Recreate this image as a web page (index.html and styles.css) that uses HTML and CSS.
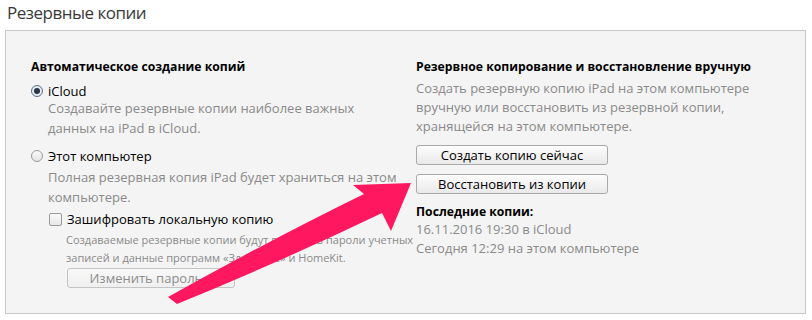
FILE: index.html
```html
<!DOCTYPE html>
<html lang="ru">
<head>
    <meta charset="UTF-8">
    <title>Резервные копии</title>
    <link rel="stylesheet" href="styles.css">
</head>
<body>
    <div class="page">
        <h1 class="title">Резервные копии</h1>
        <div class="panel">
            <div class="column left">
                <h2 class="heading">Автоматическое создание копий</h2>
                <label class="option">
                    <span class="radio checked"></span>
                    <span>iCloud</span>
                </label>
                <p class="hint first">Создавайте резервные копии наиболее важных<br>данных на iPad в iCloud.</p>
                <label class="option second">
                    <span class="radio"></span>
                    <span>Этот компьютер</span>
                </label>
                <p class="hint">Полная резервная копия iPad будет храниться на этом<br>компьютере.</p>
                <div class="nested">
                    <label class="option">
                        <span class="checkbox"></span>
                        <span>Зашифровать локальную копию</span>
                    </label>
                    <p class="hint small">Создаваемые резервные копии будут включать пароли учетных<br>записей и данные программ «Здоровье» и HomeKit.</p>
                    <button class="btn disabled">Изменить пароль...</button>
                </div>
            </div>
            <div class="column right">
                <h2 class="heading">Резервное копирование и восстановление вручную</h2>
                <p class="hint">Создать резервную копию iPad на этом компьютере<br>вручную или восстановить из резервной копии,<br>хранящейся на этом компьютере.</p>
                <div class="buttons">
                    <button class="btn">Создать копию сейчас</button>
                    <button class="btn">Восстановить из копии</button>
                </div>
                <h3 class="heading last">Последние копии:</h3>
                <p class="hint recent">16.11.2016 19:30 в iCloud<br>Сегодня 12:29 на этом компьютере</p>
            </div>
        </div>
        <svg class="arrow" width="812" height="320" viewBox="0 0 812 320">
            <path d="M168,297 Q270,240 364,194 L353,185 L411,183 L391,231 L382,213 Q280,262 177,304 Z" fill="#ff1760"/>
        </svg>
    </div>
</body>
</html>
```

FILE: styles.css
```css
* {
    margin: 0;
    padding: 0;
    box-sizing: border-box;
}

body {
    font-family: "Open Sans", "Noto Sans", sans-serif;
    font-size: 13px;
    background-color: #fff;
    color: #000;
}

.page {
    position: relative;
    width: 812px;
    height: 320px;
    padding: 0 6px 0 5px;
}

.title {
    font-size: 17px;
    font-weight: normal;
    letter-spacing: -0.5px;
    color: #3a3a3a;
    line-height: 26px;
    padding: 0 0 4px 2px;
}

.panel {
    display: flex;
    height: 284px;
    background-color: #f4f4f4;
    border: 1px solid #c8c8c8;
    padding: 26px 0 0 25px;
}

.column.left {
    width: 385px;
}

.column.right {
    flex: 1;
}

.heading {
    font-size: 12.2px;
    font-weight: bold;
    line-height: 20px;
    margin-bottom: 4px;
}

.option {
    display: flex;
    align-items: center;
    gap: 5px;
    line-height: 20px;
}

.option.second {
    margin-top: 8px;
}

.radio {
    width: 12px;
    height: 12px;
    border: 1px solid #9a9a9a;
    border-radius: 50%;
    background: linear-gradient(#fafafa, #e4e4e4);
    display: flex;
    align-items: center;
    justify-content: center;
}

.radio.checked {
    border-color: #5d6f8a;
    background: #e3ebf5;
}

.radio.checked::after {
    content: "";
    width: 6px;
    height: 6px;
    border-radius: 50%;
    background: #283448;
}

.checkbox {
    width: 13px;
    height: 13px;
    border: 1px solid #9a9a9a;
    border-radius: 2px;
    background: linear-gradient(#fafafa, #e6e6e6);
}

.hint {
    color: #8a8a8a;
    line-height: 20px;
    padding-left: 17px;
    margin-top: 1px;
    margin-bottom: 2px;
}

.hint.first {
    margin-top: -3px;
    margin-bottom: 0;
}

.nested {
    padding-left: 18px;
}

.hint.small {
    font-size: 11px;
    line-height: 18px;
    margin-top: 2px;
    margin-bottom: 1px;
}

.right .hint {
    padding-left: 0;
    line-height: 19px;
    margin-top: -2px;
    margin-bottom: 9px;
}

.buttons {
    display: flex;
    flex-direction: column;
    gap: 9px;
}

.btn {
    display: block;
    font-family: inherit;
    font-size: 13px;
    width: 192px;
    height: 20px;
    border: 1px solid #a9a9a9;
    border-radius: 3px;
    background: linear-gradient(#fdfdfd, #e9e9e9);
    color: #000;
}

.btn.disabled {
    width: 168px;
    color: #8c8c8c;
    border-color: #c4c4c4;
    background: linear-gradient(#f8f8f8, #efefef);
    margin-left: 18px;
}

.heading.last {
    line-height: 18px;
    margin-top: 9px;
    margin-bottom: 0;
}

.right .hint.recent {
    margin-top: -1px;
}

.arrow {
    position: absolute;
    left: 0;
    top: 0;
}
```
